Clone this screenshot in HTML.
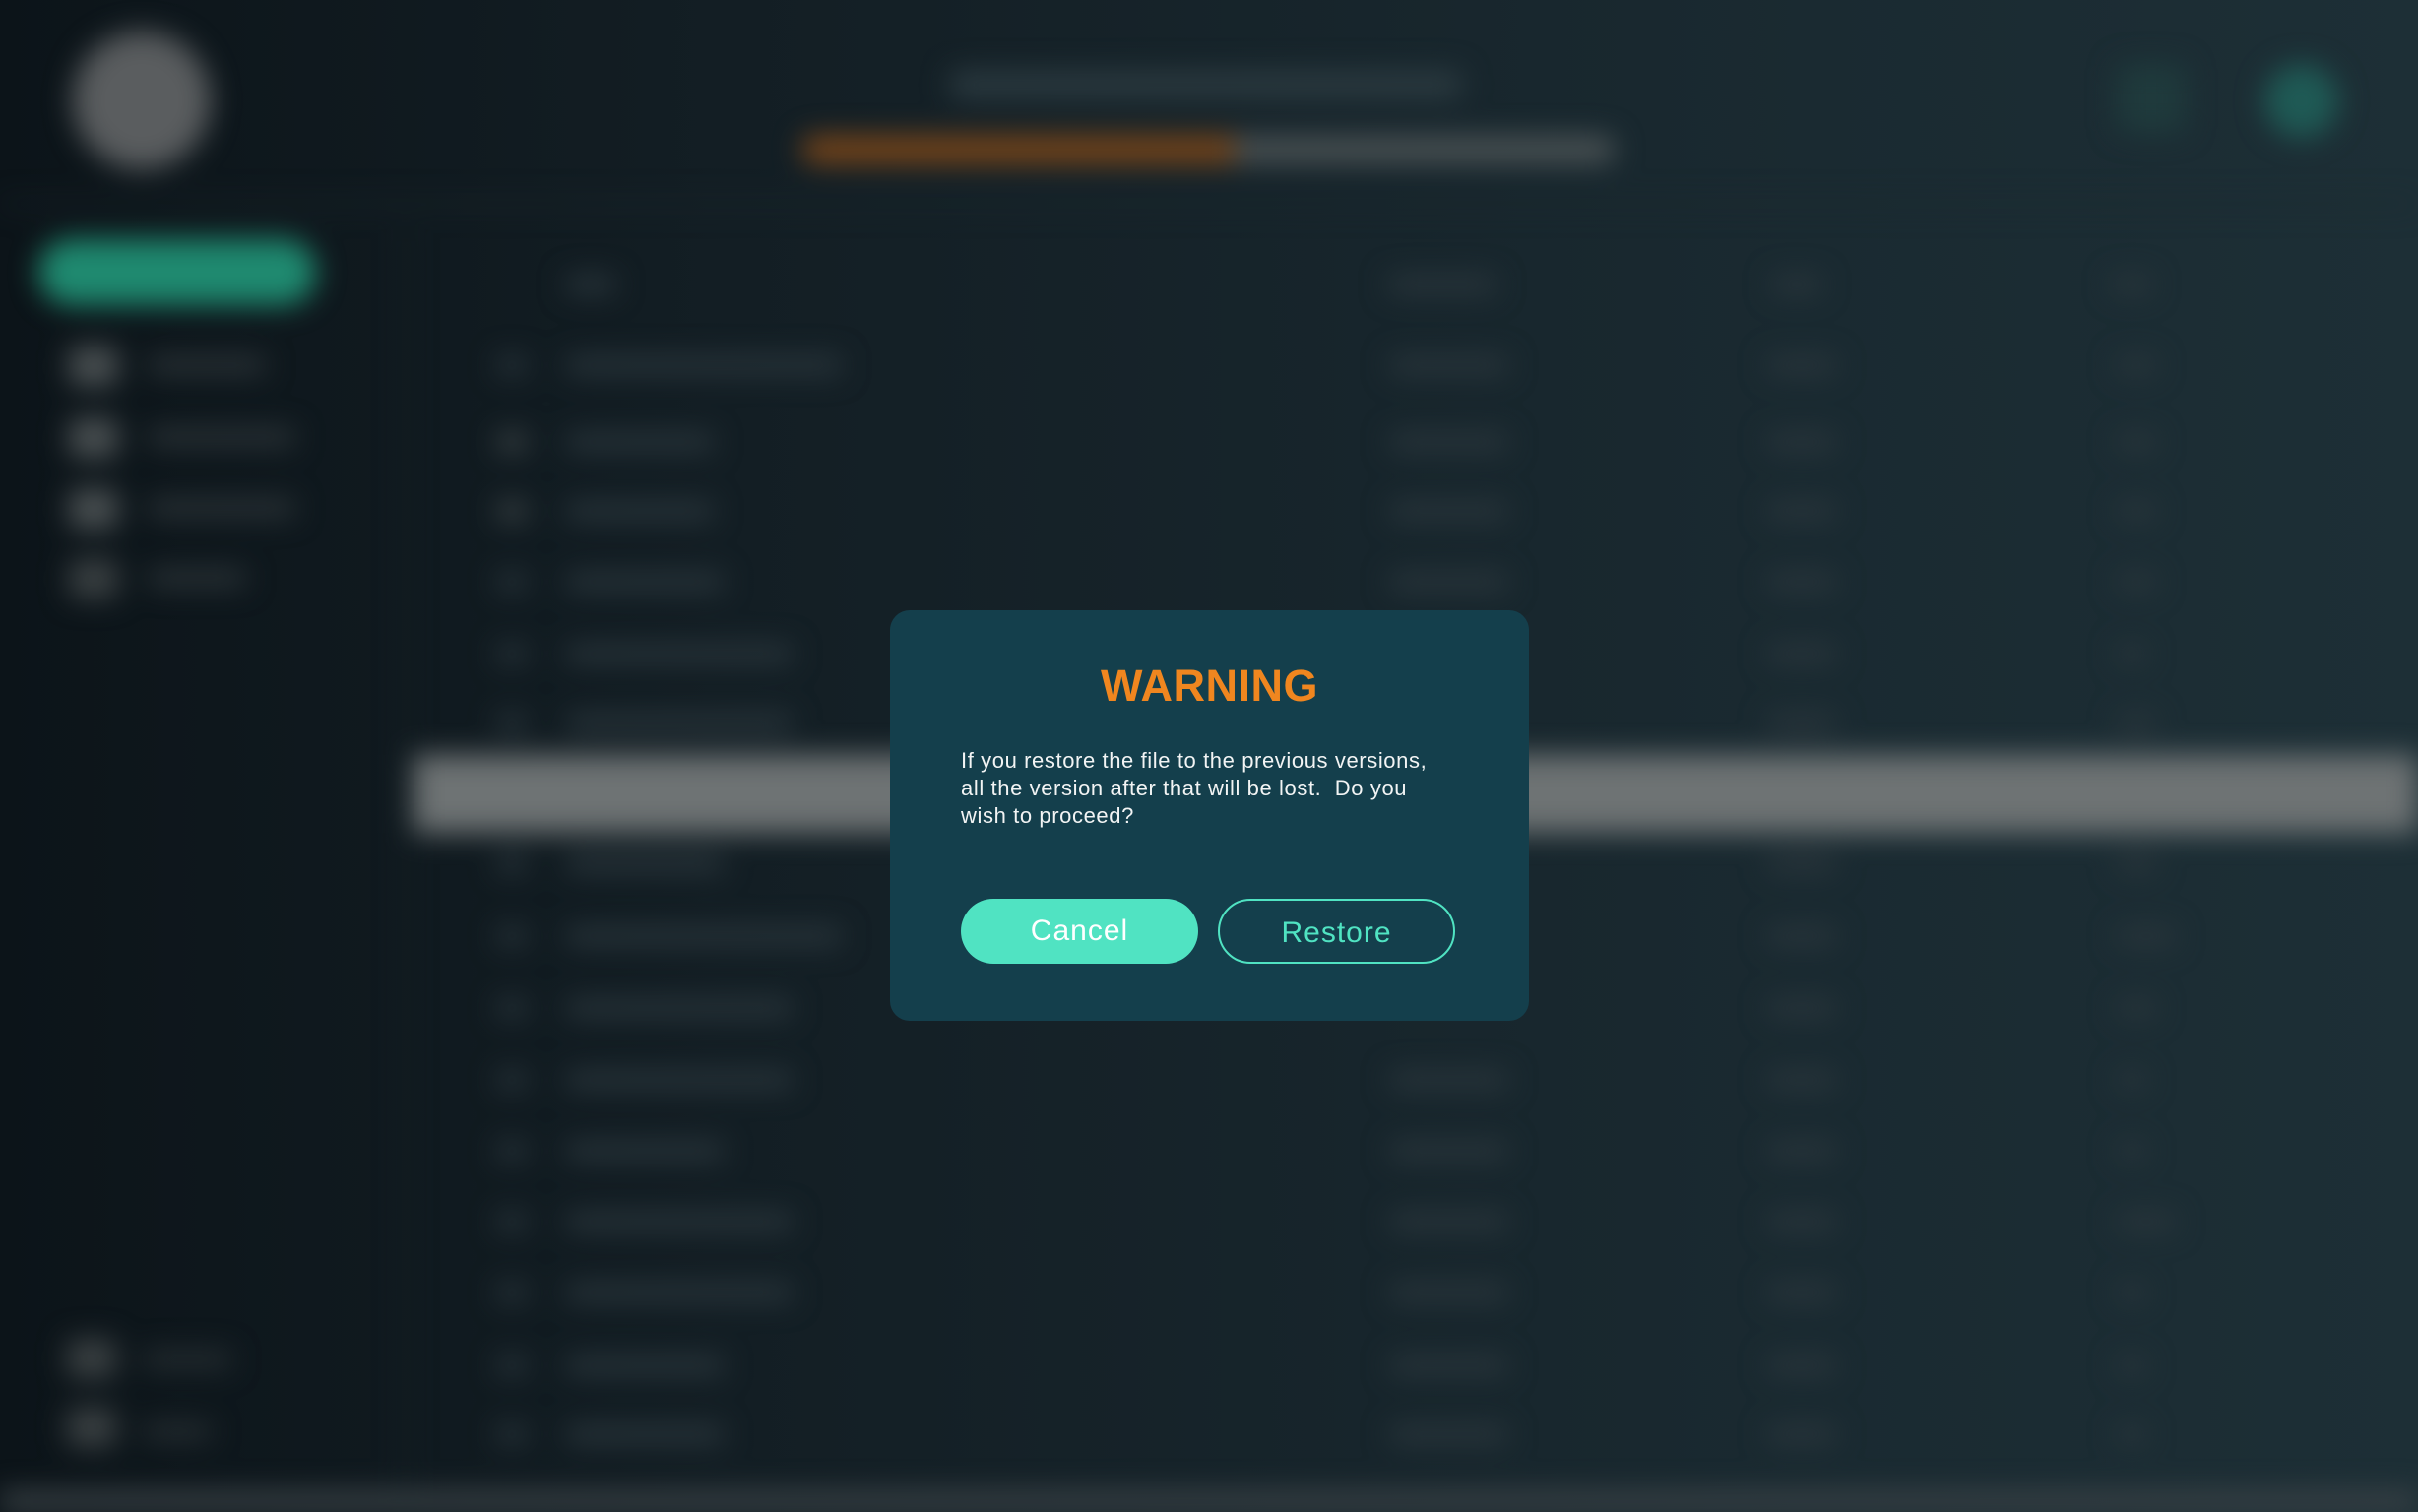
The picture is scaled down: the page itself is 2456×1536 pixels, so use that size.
<!DOCTYPE html>
<html><head><meta charset="utf-8"><style>
html,body{margin:0;padding:0;width:2456px;height:1536px;overflow:hidden;background:#121c22;font-family:"Liberation Sans",sans-serif}
#bg{position:absolute;left:0;top:0;width:2456px;height:1536px;background:linear-gradient(90deg,#0c1419 0%,#131e24 30%,#1a2a31 75%,#1d2f36 100%)}
#blur{position:absolute;left:0;top:0;width:2456px;height:1536px;filter:blur(14px)}
.a{position:absolute}
.r{position:absolute;left:0;width:2456px;height:18px}
.r i{position:absolute;top:0;height:18px;background:#2a363c;border-radius:6px}
#dlg{position:absolute;left:904px;top:620px;width:649px;height:417px;background:#143f4c;border-radius:20px}
#dlg h1{position:absolute;left:0;width:100%;top:51px;margin:0;text-align:center;color:#f0861f;font-size:45px;font-weight:bold;letter-spacing:0.5px}
#dlg p{position:absolute;left:72px;top:139px;margin:0;width:560px;color:#f2f4f4;font-size:22px;line-height:28px;letter-spacing:0.6px;white-space:nowrap}
.btn{position:absolute;top:293px;width:241px;height:66px;border-radius:33px;box-sizing:border-box;text-align:center;line-height:66px;font-size:30px;letter-spacing:1px}
</style></head><body>
<div id="bg"></div>
<div id="blur">
<div class="a" style="left:74px;top:32px;width:140px;height:140px;border-radius:50%;background:#5a5d5f"></div>
<div class="a" style="left:965px;top:72px;width:520px;height:28px;background:#2b3a40;border-radius:8px"></div>
<div class="a" style="left:814px;top:138px;width:440px;height:28px;background:#7a4619;border-radius:14px 0 0 14px"></div>
<div class="a" style="left:1254px;top:138px;width:387px;height:28px;background:#4a5254;border-radius:0 14px 14px 0"></div>
<div class="a" style="left:2150px;top:65px;width:70px;height:70px;background:#1f3a3c;border-radius:10px"></div>
<div class="a" style="left:2300px;top:65px;width:75px;height:75px;background:#1f5a55;border-radius:50%"></div>
<div class="a" style="left:0;top:205px;width:2456px;height:4px;background:#1d2a30"></div>
<div class="a" style="left:39px;top:243px;width:282px;height:67px;background:#1f8a70;border-radius:34px"></div>
<div class="a" style="left:70px;top:352px;width:50px;height:40px;background:#4a5052;border-radius:8px"></div>
<div class="a" style="left:70px;top:425px;width:50px;height:40px;background:#4a5052;border-radius:8px"></div>
<div class="a" style="left:70px;top:497px;width:50px;height:40px;background:#4a5052;border-radius:8px"></div>
<div class="a" style="left:70px;top:568px;width:50px;height:40px;background:#3a4042;border-radius:8px"></div>
<div class="a" style="left:150px;top:362px;width:120px;height:18px;background:#2c3438;border-radius:6px"></div>
<div class="a" style="left:150px;top:435px;width:150px;height:18px;background:#2c3438;border-radius:6px"></div>
<div class="a" style="left:150px;top:507px;width:150px;height:18px;background:#2c3438;border-radius:6px"></div>
<div class="a" style="left:150px;top:578px;width:100px;height:18px;background:#2c3438;border-radius:6px"></div>
<div class="a" style="left:68px;top:1360px;width:50px;height:40px;background:#3a4042;border-radius:8px"></div>
<div class="a" style="left:68px;top:1430px;width:50px;height:40px;background:#3a4042;border-radius:8px"></div>
<div class="a" style="left:145px;top:1372px;width:90px;height:18px;background:#262e32;border-radius:6px"></div>
<div class="a" style="left:145px;top:1445px;width:70px;height:18px;background:#262e32;border-radius:6px"></div>
<div class="a" style="left:410px;top:230px;width:4px;height:1290px;background:#172126"></div>
<div class="r" style="top:280px"><i style="left:575px;width:50px"></i><i style="left:1410px;width:110px"></i><i style="left:1800px;width:50px"></i><i style="left:2145px;width:40px"></i></div>
<div class="a" style="left:420px;top:767px;width:2036px;height:79px;background:#6e7374"></div>
<div class="a" style="left:0;top:1515px;width:2456px;height:21px;background:#3a4246"></div>
<div class="r" style="top:362px"><i style="left:505px;width:30px"></i><i style="left:575px;width:280px"></i><i style="left:1412px;width:120px"></i><i style="left:1795px;width:70px"></i><i style="left:2150px;width:40px"></i></div>
<div class="r" style="top:440px"><i style="left:505px;width:30px;background:#3e4648"></i><i style="left:575px;width:150px"></i><i style="left:1412px;width:120px"></i><i style="left:1795px;width:70px"></i><i style="left:2150px;width:40px"></i></div>
<div class="r" style="top:510px"><i style="left:505px;width:30px;background:#3e4648"></i><i style="left:575px;width:150px"></i><i style="left:1412px;width:120px"></i><i style="left:1795px;width:70px"></i><i style="left:2150px;width:40px"></i></div>
<div class="r" style="top:582px"><i style="left:505px;width:30px"></i><i style="left:575px;width:160px"></i><i style="left:1412px;width:120px"></i><i style="left:1795px;width:70px"></i><i style="left:2150px;width:40px"></i></div>
<div class="r" style="top:655px"><i style="left:505px;width:30px"></i><i style="left:575px;width:230px"></i><i style="left:1795px;width:70px"></i><i style="left:2150px;width:30px"></i></div>
<div class="r" style="top:725px"><i style="left:505px;width:30px"></i><i style="left:575px;width:230px"></i><i style="left:1795px;width:70px"></i><i style="left:2150px;width:40px"></i></div>
<div class="r" style="top:868px"><i style="left:505px;width:30px"></i><i style="left:575px;width:160px"></i><i style="left:1795px;width:70px"></i><i style="left:2150px;width:40px"></i></div>
<div class="r" style="top:942px"><i style="left:505px;width:30px"></i><i style="left:575px;width:280px"></i><i style="left:1795px;width:70px"></i><i style="left:2150px;width:60px"></i></div>
<div class="r" style="top:1015px"><i style="left:505px;width:30px"></i><i style="left:575px;width:230px"></i><i style="left:1795px;width:70px"></i><i style="left:2150px;width:40px"></i></div>
<div class="r" style="top:1088px"><i style="left:505px;width:30px"></i><i style="left:575px;width:230px"></i><i style="left:1412px;width:120px"></i><i style="left:1795px;width:70px"></i><i style="left:2150px;width:30px"></i></div>
<div class="r" style="top:1160px"><i style="left:505px;width:30px"></i><i style="left:575px;width:160px"></i><i style="left:1412px;width:120px"></i><i style="left:1795px;width:70px"></i><i style="left:2150px;width:30px"></i></div>
<div class="r" style="top:1232px"><i style="left:505px;width:30px"></i><i style="left:575px;width:230px"></i><i style="left:1412px;width:120px"></i><i style="left:1795px;width:70px"></i><i style="left:2150px;width:60px"></i></div>
<div class="r" style="top:1304px"><i style="left:505px;width:30px"></i><i style="left:575px;width:230px"></i><i style="left:1412px;width:120px"></i><i style="left:1795px;width:70px"></i><i style="left:2150px;width:30px"></i></div>
<div class="r" style="top:1378px"><i style="left:505px;width:30px"></i><i style="left:575px;width:160px"></i><i style="left:1412px;width:120px"></i><i style="left:1795px;width:70px"></i><i style="left:2150px;width:30px"></i></div>
<div class="r" style="top:1448px"><i style="left:505px;width:30px"></i><i style="left:575px;width:160px"></i><i style="left:1412px;width:120px"></i><i style="left:1795px;width:70px"></i><i style="left:2150px;width:30px"></i></div>
</div>
<div id="dlg">
<h1>WARNING</h1>
<p>If you restore the file to the previous versions,<br>all the version after that will be lost.&nbsp; Do you<br>wish to proceed?</p>
<div class="btn" style="left:72px;background:#50e3c2;color:#fff">Cancel</div>
<div class="btn" style="left:333px;border:2px solid #50e3c2;color:#50e3c2">Restore</div>
</div>
</body></html>
